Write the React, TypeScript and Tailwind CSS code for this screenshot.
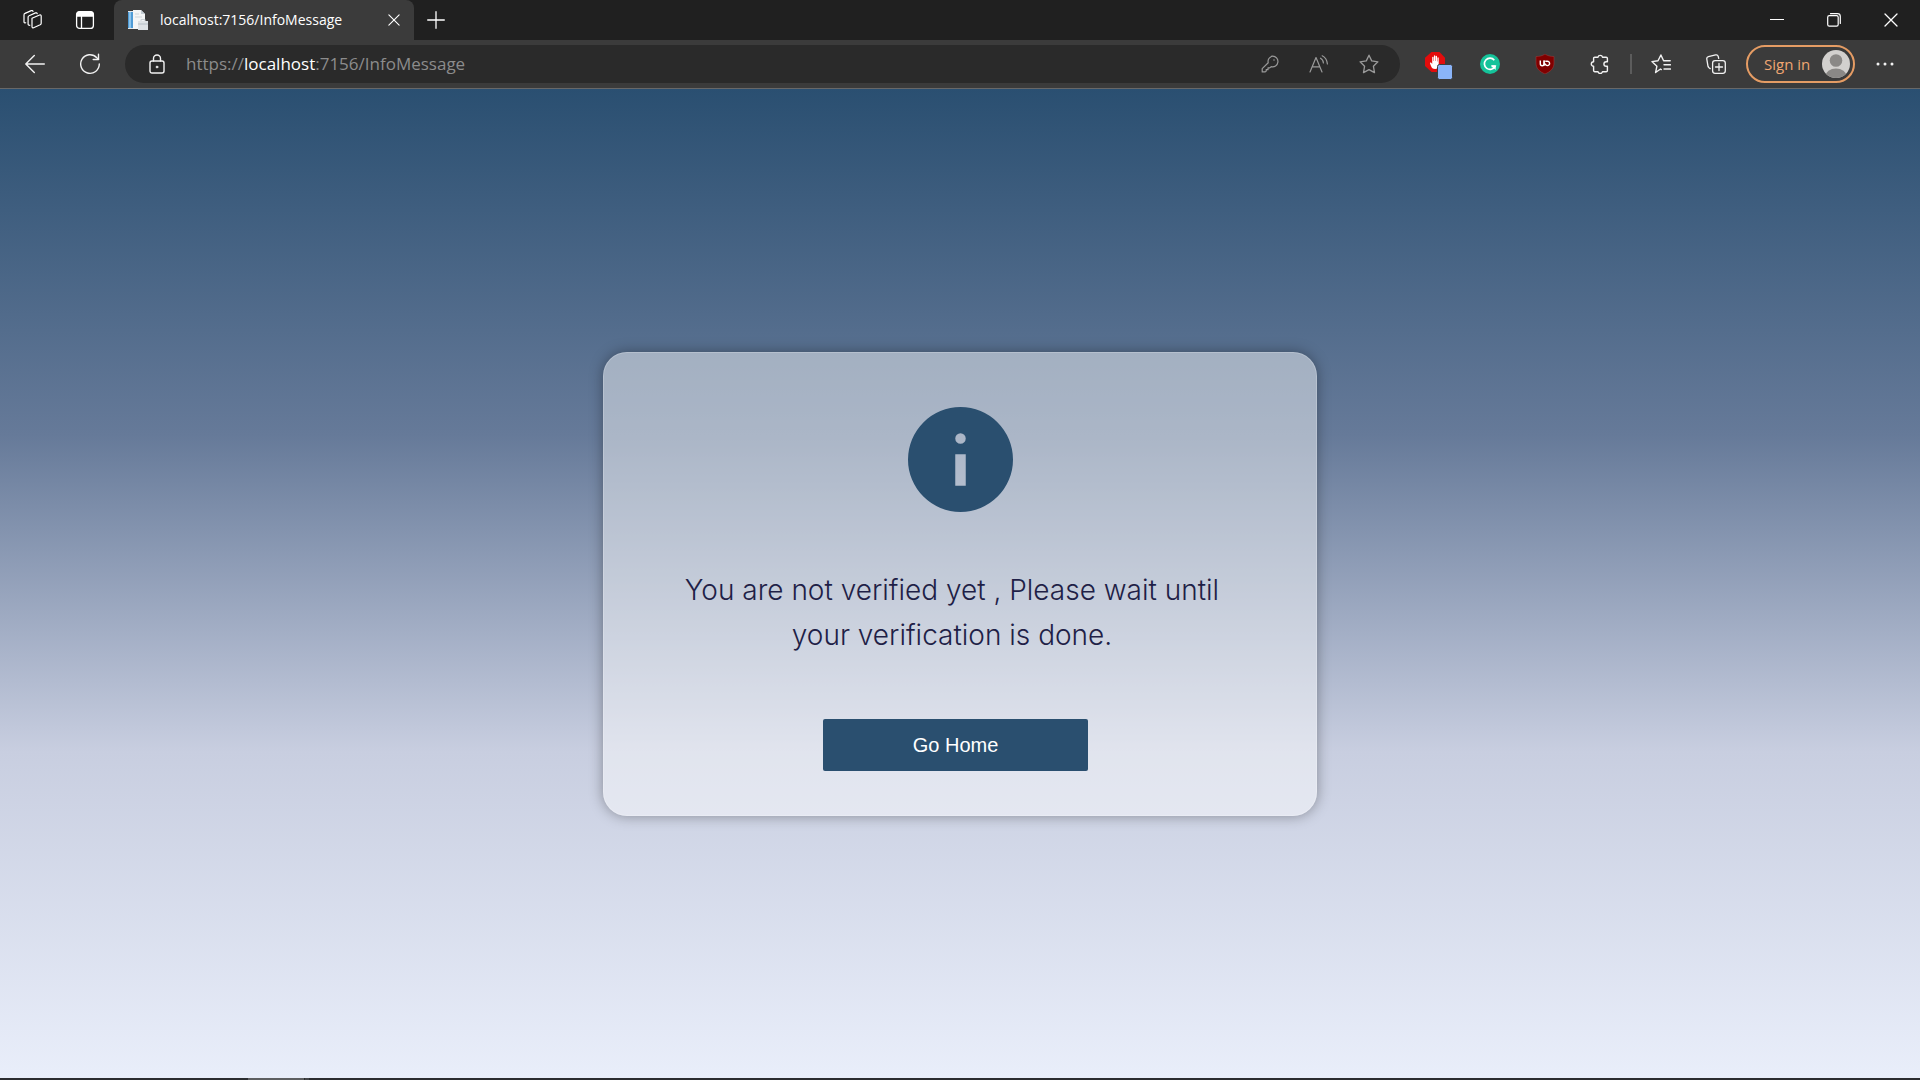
import React from "react";

type IconProps = { className?: string };

const stroke = {
  fill: "none",
  stroke: "currentColor",
  strokeLinecap: "round" as const,
  strokeLinejoin: "round" as const,
};

const Workspaces = ({ className = "" }: IconProps) => (
  <svg viewBox="0 0 24 24" className={className} {...stroke} strokeWidth="1.2">
    <path d="M12 10.2 19.6 7c.8-.3 1.6.2 1.6 1.1v7.100c0 .7-.4 1.200-1 1.500l-6.600 3.100c-.8.3-1.600-.2-1.600-1V10.200Z" />
    <path d="M9.800 17.200c-.9.300-1.700-.2-1.700-1.100V9.200c0-.7.400-1.300 1-1.500l6.400-2.800c.8-.3 1.500 0 1.700.8" />
    <path d="M5.700 14.800c-.9.300-1.700-.2-1.700-1.100V6.900c0-.7.400-1.300 1-1.500L11.300 2.600c.8-.3 1.500 0 1.700.8" />
  </svg>
);

const TabActions = ({ className = "" }: IconProps) => (
  <svg viewBox="0 0 20 20" className={className} {...stroke} strokeWidth="1.300">
    <rect x="1.600" y="1.600" width="16.800" height="16.800" rx="3" />
    <path d="M2 6V4.500A2.500 2.500 0 0 1 4.500 2h11A2.500 2.500 0 0 1 18 4.500V6Z" fill="currentColor" />
    <path d="M6.500 6v12" />
  </svg>
);

const Favicon = ({ className = "" }: IconProps) => (
  <svg viewBox="0 0 20 20" className={className}>
    <path d="M0 1h12v18H0Z" fill="#e4e8ec" />
    <path d="M0 2h5v16H0Z" fill="#4f9bd5" />
    <path d="M1 2h2v16H1Z" fill="#8cc4ec" />
    <path d="M5 0h8l4 4v15H5Z" fill="#f3f5f6" />
    <path d="M13 0v4h4Z" fill="#c3ccd3" />
    <path d="M7 4h4M7 7h7" stroke="#cdd5da" />
    <path d="M10 11h10v9H10Z" fill="#dfe3e6" />
    <path d="M10 14h10" stroke="#b5bec5" />
    <path d="M13 11V9.500h4V11" fill="none" stroke="#cbd2d6" />
  </svg>
);

const Cross = ({ className = "" }: IconProps) => (
  <svg viewBox="0 0 14 14" className={className} {...stroke} strokeWidth="1.300">
    <path d="m1 1 12 12M13 1 1 13" />
  </svg>
);

const Plus = ({ className = "" }: IconProps) => (
  <svg viewBox="0 0 18 18" className={className} {...stroke} strokeWidth="1.300">
    <path d="M9 .700v16.600M.700 9h16.600" />
  </svg>
);

const Back = ({ className = "" }: IconProps) => (
  <svg viewBox="0 0 20 20" className={className} {...stroke} strokeWidth="1.400">
    <path d="M19.300 10H1M9.300 1.500.800 10l8.500 8.500" />
  </svg>
);

const Reload = ({ className = "" }: IconProps) => (
  <svg viewBox="0 0 22 22" className={className} {...stroke} strokeWidth="1.400">
    <path d="M20.300 11A9.300 9.300 0 1 1 17.800 4.700L19.500 6.300" />
    <path d="M19.500 1.200v5.300h-5.300" />
  </svg>
);

const Lock = ({ className = "" }: IconProps) => (
  <svg viewBox="0 0 16 20" className={className} {...stroke} strokeWidth="1.400">
    <rect x="1" y="7" width="14" height="12" rx="2" />
    <path d="M4.500 7V4.500a3.500 3.500 0 0 1 7 0V7" />
    <circle cx="8" cy="13" r="1" fill="currentColor" strokeWidth=".600" />
  </svg>
);

const KeyIcon = ({ className = "" }: IconProps) => (
  <svg viewBox="0 0 18 18" className={className} {...stroke} strokeWidth="1.200">
    <path d="M11.500 1.200a5.300 5.300 0 1 1-1.300 10.400l-1.400 1.300H7v1.800H5.200v1.400l-.900.800H1.200v-3.300l6-5.900a5.300 5.300 0 0 1 4.300-6.500Z" />
    <circle cx="13" cy="5" r=".800" fill="currentColor" stroke="none" />
  </svg>
);

const ReadAloud = ({ className = "" }: IconProps) => (
  <svg viewBox="0 0 20 18" className={className} {...stroke} strokeWidth="1.200">
    <path d="M1 17 7 2.500 13 17M3.200 11.800h7.600" />
    <path d="M11.500 3.200c1.700.900 2.800 2.600 2.900 4.800M13.200.800c3 1.500 4.900 4.500 5.200 8.200" />
  </svg>
);

const Star = ({ className = "" }: IconProps) => (
  <svg viewBox="0 0 20 20" className={className} {...stroke} strokeWidth="1.300">
    <path d="m10 1.200 2.700 5.700 6.200.900-4.500 4.400 1.100 6.400-5.500-3-5.500 3 1.100-6.400L1.100 7.800l6.200-.900Z" />
  </svg>
);

const AdBlock = ({ className = "" }: IconProps) => (
  <svg viewBox="0 0 28 28" className={className}>
    <path d="M6.500 0h8L20 5.800v8.200L14.500 20h-8L0 14V5.800Z" fill="#e30c0c" />
    <path
      d="M5 11.500c-.3-.9.700-1.400 1.300-.7L7.200 12V5.300c0-.9 1.300-.9 1.300 0V9h.4V3.900c0-1 1.400-1 1.400 0V9h.4V4.300c0-.9 1.300-.9 1.300 0v5.200h.4V6c0-.9 1.300-.9 1.300 0v6.500c0 2.900-1.400 4.500-3.600 4.500-2.500 0-3.400-1.400-4.100-3.100Z"
      fill="#fff"
    />
    <rect x="12.500" y="12.500" width="15" height="15" rx="2" fill="#8ab4f8" stroke="#3b3b3b" />
  </svg>
);

const Grammarly = ({ className = "" }: IconProps) => (
  <svg viewBox="0 0 20 20" className={className}>
    <circle cx="10" cy="10" r="10" fill="#15c39a" />
    <path d="M14.300 6.200A5.600 5.600 0 1 0 15 12.300h-3.500" fill="none" stroke="#fff" strokeWidth="1.700" />
    <path d="M11 11.300h4.700V16Z" fill="#fff" />
  </svg>
);

const Shield = ({ className = "" }: IconProps) => (
  <svg viewBox="0 0 20 20" className={className}>
    <path d="M10 0c2.500 1.800 5.500 2.500 9 2.500V9c0 5.500-3.500 8.500-9 11C4.500 17.500 1 14.500 1 9V2.500C4.500 2.500 7.500 1.800 10 0Z" fill="#800000" stroke="#a04040" strokeWidth=".500" />
    <path d="M5.300 6.500v3.300a1.900 1.900 0 0 0 3.800 0V6.500" fill="none" stroke="#fff" strokeWidth="1.400" />
    <path d="M9.100 6.500v5.200M10.300 7.200h1.900a2.200 2.200 0 1 1-2 2.200" fill="none" stroke="#fff" strokeWidth="1.400" />
  </svg>
);

const Puzzle = ({ className = "" }: IconProps) => (
  <svg viewBox="0 0 20 20" className={className} {...stroke} strokeWidth="1.400">
    <path d="M8 3.200a2.300 2.300 0 0 1 4.500 0h3.700c.7 0 1.200.5 1.200 1.200v3.300h-1.200a2.300 2.300 0 0 0 0 4.600h1.200v4.200c0 .7-.5 1.200-1.200 1.200h-3.700a2.300 2.300 0 0 1-4.500 0H4.800c-.7 0-1.200-.5-1.200-1.200v-4.200a2.300 2.300 0 0 1 0-4.600V4.400c0-.7.500-1.200 1.200-1.200Z" />
  </svg>
);

const Favorites = ({ className = "" }: IconProps) => (
  <svg viewBox="0 0 20 20" className={className} {...stroke} strokeWidth="1.400">
    <path d="M10.300 15.600 9.500 15l-4.900 3.500 1.300-6.300L.900 7.600l6.100-.8L9.900 1l2.700 5.800h6.600" />
    <path d="M13 10.700h6.400M13 15h6.400" />
  </svg>
);

const Collections = ({ className = "" }: IconProps) => (
  <svg viewBox="0 0 20 20" className={className} {...stroke} strokeWidth="1.300">
    <path d="M4.200 14.600 3 13.800c-.5-.4-.8-.9-1-1.500L.800 5.200c-.2-1.100.500-2.200 1.600-2.500L9.600.900c1.200-.3 2.300.3 2.600 1.400l.5 2" />
    <rect x="6.600" y="6.600" width="12.700" height="12.700" rx="2.500" />
    <path d="M13 9.500v7M9.500 13h7" />
  </svg>
);

const Restore = ({ className = "" }: IconProps) => (
  <svg viewBox="0 0 14 14" className={className} {...stroke} strokeWidth="1.200">
    <rect x=".700" y="2.700" width="10.500" height="10.500" rx="1.600" />
    <path d="M3.500.700h7a2.800 2.800 0 0 1 2.800 2.800v7" />
  </svg>
);

const Avatar = ({ className = "" }: IconProps) => (
  <svg viewBox="0 0 28 28" className={className}>
    <defs>
      <clipPath id="avatar-clip">
        <circle cx="14" cy="14" r="14" />
      </clipPath>
    </defs>
    <g clipPath="url(#avatar-clip)">
      <rect width="28" height="28" fill="#d2d0ce" />
      <circle cx="14" cy="10.500" r="6.300" fill="#8a8886" />
      <ellipse cx="14" cy="26" rx="10.500" ry="7.500" fill="#8a8886" />
    </g>
  </svg>
);

const InfoIcon = ({ className = "" }: IconProps) => (
  <svg viewBox="0 0 20 20" className={className} fill="#2a4f6f" role="img" aria-label="Information">
    <path
      fillRule="evenodd"
      d="M10 0a10 10 0 1 1 0 20 10 10 0 0 1 0-20ZM9 9v6h2V9ZM10 5a1 1 0 1 0 0 2 1 1 0 0 0 0-2Z"
    />
  </svg>
);

type ButtonProps = { label: string; className?: string; children: React.ReactNode };

const IconButton = ({ label, className = "", children }: ButtonProps) => (
  <button type="button" aria-label={label} className={`flex shrink-0 items-center justify-center ${className}`}>
    {children}
  </button>
);

const TabBar = () => (
  <header className="flex h-10 items-stretch bg-[#202020] text-white">
    <div className="flex w-[114px] items-center gap-[29px] rounded-br-lg pl-5">
      <IconButton label="Workspaces" className="w-6"><Workspaces className="size-6" /></IconButton>
      <IconButton label="Tab actions" className="w-6"><TabActions className="size-5" /></IconButton>
    </div>
    <div className="flex w-[300px] items-center rounded-t-lg bg-[#3b3b3b] pl-[14px] pr-3">
      <Favicon className="size-5 shrink-0" />
      <span className="ml-3 flex-1 whitespace-nowrap text-sm">localhost:7156/InfoMessage</span>
      <IconButton label="Close tab" className="size-4"><Cross className="size-3" /></IconButton>
    </div>
    <IconButton label="New tab" className="w-[43px]"><Plus className="size-[18px]" /></IconButton>
    <div className="ml-auto flex">
      <IconButton label="Minimize" className="w-[57px]">
        <svg viewBox="0 0 14 2" className="h-0.5 w-[14px]" fill="currentColor"><path d="M0 0h14v1H0Z" /></svg>
      </IconButton>
      <IconButton label="Restore" className="w-[57px]"><Restore className="size-[14px]" /></IconButton>
      <IconButton label="Close" className="w-[58px]"><Cross className="size-[14px]" /></IconButton>
    </div>
  </header>
);

const Toolbar = () => (
  <nav className="flex h-[49px] items-center border-b border-[#686868] bg-[#3b3b3b] text-[#f2f2f2]">
    <IconButton label="Back" className="ml-[7px] w-14"><Back className="size-5" /></IconButton>
    <IconButton label="Refresh" className="w-[54px]"><Reload className="size-[22px]" /></IconButton>
    <div className="ml-2 flex h-[38px] flex-1 items-center rounded-full bg-[#2a2a2a] pl-6 pr-[21px]">
      <IconButton label="Site information" className="w-4"><Lock className="h-5 w-4" /></IconButton>
      <a href="#address" className="ml-[21px] flex-1 text-[17px] text-[#8c8c8c]">
        https://<span className="text-white">localhost</span>:7156/InfoMessage
      </a>
      <div className="flex items-center gap-[30px] text-[#9a9a9a]">
        <IconButton label="Passwords"><KeyIcon className="size-[18px]" /></IconButton>
        <IconButton label="Read aloud"><ReadAloud className="h-[18px] w-5" /></IconButton>
        <IconButton label="Add to favorites"><Star className="size-5" /></IconButton>
      </div>
    </div>
    <IconButton label="AdBlock" className="ml-[25px]"><AdBlock className="mt-1 size-7" /></IconButton>
    <IconButton label="Grammarly" className="ml-[27px]"><Grammarly className="size-5" /></IconButton>
    <IconButton label="uBlock" className="ml-[35px]"><Shield className="size-5" /></IconButton>
    <IconButton label="Extensions" className="ml-[35px]"><Puzzle className="size-5" /></IconButton>
    <div className="ml-5 h-5 w-0.5 bg-[#5c5c5c]" />
    <IconButton label="Favorites" className="ml-[19px]"><Favorites className="size-5" /></IconButton>
    <IconButton label="Collections" className="ml-[35px]"><Collections className="size-5" /></IconButton>
    <button
      type="button"
      className="ml-5 flex h-[38px] w-[109px] shrink-0 items-center justify-between rounded-full border-2 border-[#e59c64] pl-4 pr-[3px] text-[15px] text-[#f0a672]"
    >
      Sign in
      <Avatar className="size-7" />
    </button>
    <IconButton label="Settings and more" className="ml-[21px] mr-[26px]">
      <svg viewBox="0 0 18 4" className="h-1 w-[18px]" fill="currentColor">
        <circle cx="2" cy="2" r="1.500" />
        <circle cx="9" cy="2" r="1.500" />
        <circle cx="16" cy="2" r="1.500" />
      </svg>
    </IconButton>
  </nav>
);

const MessageCard = () => (
  <section className="flex w-[714px] flex-col items-center rounded-3xl border border-white/20 bg-white/45 pb-11 pt-[54px] shadow-[0_0_14px_rgba(0,0,0,0.35)]">
    <InfoIcon className="size-[105px]" />
    <p className="mr-4 mt-14 w-[560px] text-center font-['Inter',sans-serif] text-[28px] font-light leading-[45px] text-[#1f1f47]">
      You are not verified yet , Please wait until your verification is done.
    </p>
    <button
      type="button"
      className="mr-[9px] mt-[61px] h-[52px] w-[265px] rounded-xs bg-[#2a4f6f] font-['Liberation_Sans',sans-serif] text-xl text-white"
    >
      Go Home
    </button>
  </section>
);

export default function App() {
  return (
    <div className="flex min-h-screen flex-col font-['Open_Sans',sans-serif]">
      <TabBar />
      <Toolbar />
      <main className="flex flex-1 items-center justify-center bg-[linear-gradient(180deg,#2a4f71_0%,#667a99_35%,#c8cee0_67%,#e9eefa_100%)]">
        <MessageCard />
      </main>
      <footer className="flex h-0.5 bg-[#2b2d30]">
        <div className="ml-[248px] w-14 bg-[#5e5f61]" />
        <div className="ml-px w-1 bg-[#444648]" />
      </footer>
    </div>
  );
}
